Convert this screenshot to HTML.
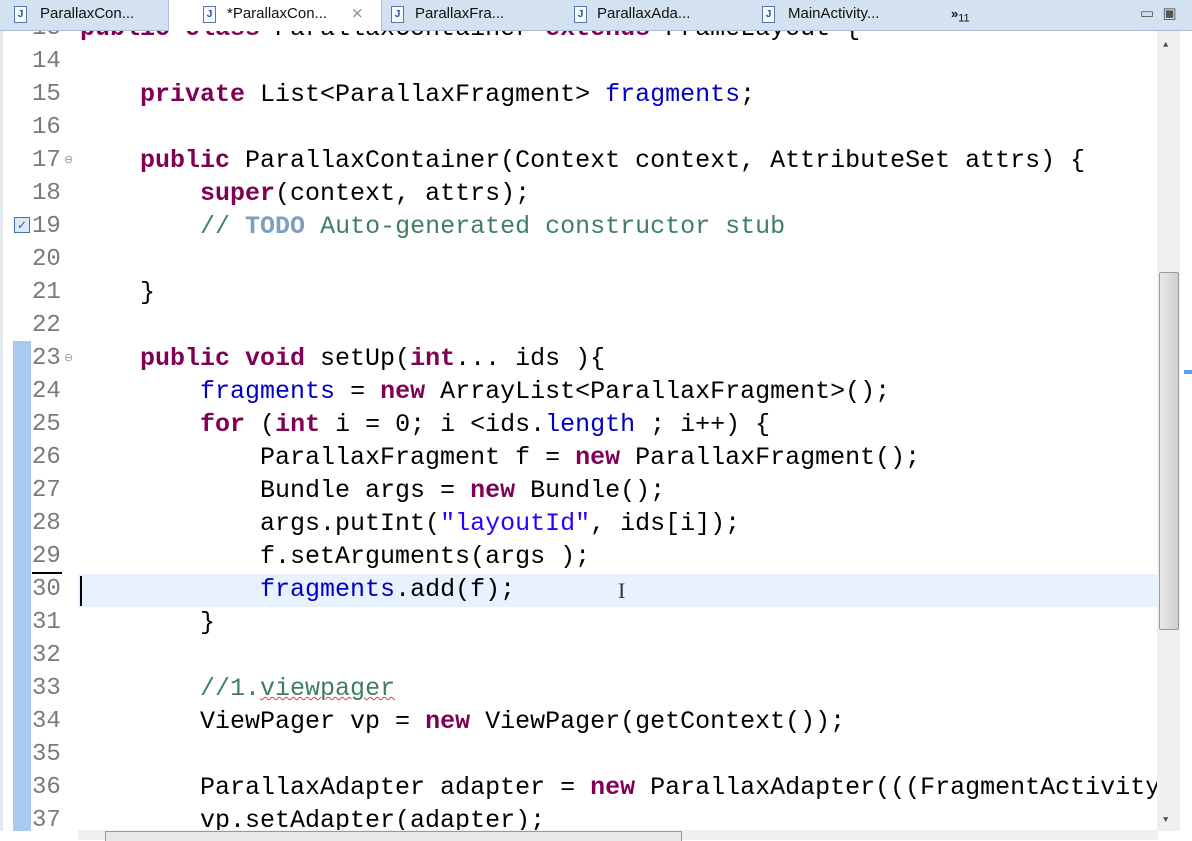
<!DOCTYPE html>
<html><head><meta charset="utf-8"><style>
body{margin:0;width:1192px;height:840px;overflow:hidden;background:#fff;position:relative;font-family:"Liberation Mono",monospace}
.tabs{position:absolute;left:0;top:0;width:1192px;height:30px;background:#d4e1f0;border-bottom:1px solid #a9bcd3;font-family:"Liberation Sans",sans-serif;font-size:15px;color:#111;z-index:5}
.tt{position:absolute;top:0;line-height:28px;white-space:nowrap}
.ic{position:absolute;top:6px;width:11px;height:15px;border:1px solid #5577aa;background:#f6f9ff;font-size:10px;line-height:15px;text-align:center;color:#2a4f8a;font-weight:bold;font-family:"Liberation Sans",sans-serif}
.act{position:absolute;left:168px;top:0;width:212px;height:31px;background:#fff;border-left:1px solid #a9bcd3;border-right:1px solid #a9bcd3}
.lbar{position:absolute;left:0;top:31px;width:3px;height:800px;background:#e3e8ef}
.chg{position:absolute;left:13px;top:341px;width:18px;height:490px;background:#a9c9f0}
.ln{position:absolute;left:32px;width:44px;font-size:24px;color:#7a7a7a;line-height:33px}
.code{position:absolute;left:80px;font-size:25px;line-height:33px;white-space:pre;color:#000}
.k{color:#7f0055;font-weight:bold}.f{color:#0000c0}.c{color:#3f7f5f}.t{color:#7f9fbf;font-weight:bold}.s{color:#2a00ff}
.w{text-decoration:underline wavy #e04040;text-decoration-thickness:1px}
.cur{position:absolute;left:78px;top:574px;width:1079px;height:33px;background:#e8f2fe}
.vs{position:absolute;left:1157px;top:31px;width:23px;height:800px;background:#f0f0f0}
.thumb{position:absolute;left:1159px;top:272px;width:20px;height:358px;background:linear-gradient(90deg,#e8e8e8,#d0d0d0);border:1px solid #999;border-radius:2px;box-sizing:border-box}
.hs{position:absolute;left:78px;top:830px;width:1080px;height:10px;background:#f0f0f0}
</style></head><body>
<div class="lbar"></div>
<div class="chg"></div>
<div class="cur"></div>
<div style="position:absolute;left:80px;top:576px;width:2px;height:30px;background:#000"></div>
<div style="position:absolute;left:32px;top:572px;width:30px;height:2px;background:#000"></div>
<div class="ln" style="top:12px">13<br>14<br>15<br>16<br>17<br>18<br>19<br>20<br>21<br>22<br>23<br>24<br>25<br>26<br>27<br>28<br>29<br>30<br>31<br>32<br>33<br>34<br>35<br>36<br>37</div>
<div style="position:absolute;left:14px;top:217px;width:14px;height:14px;border:1px solid #4a6fa5;background:#dde8f7;color:#2a60b0;font-size:12px;line-height:14px;text-align:center;font-family:'DejaVu Sans',sans-serif">✓</div>
<div style="position:absolute;left:64px;top:153px;font-size:11px;color:#8899aa">⊖</div>
<div style="position:absolute;left:64px;top:351px;font-size:11px;color:#8899aa">⊖</div>
<div class="code" style="top:12px"><span class="k">public class</span> ParallaxContainer <span class="k">extends</span> FrameLayout {

    <span class="k">private</span> List&lt;ParallaxFragment&gt; <span class="f">fragments</span>;

    <span class="k">public</span> ParallaxContainer(Context context, AttributeSet attrs) {
        <span class="k">super</span>(context, attrs);
        <span class="c">// <span class="t">TODO</span> Auto-generated constructor stub</span>

    }

    <span class="k">public void</span> setUp(<span class="k">int</span>... ids ){
        <span class="f">fragments</span> = <span class="k">new</span> ArrayList&lt;ParallaxFragment&gt;();
        <span class="k">for</span> (<span class="k">int</span> i = 0; i &lt;ids.<span class="f">length</span> ; i++) {
            ParallaxFragment f = <span class="k">new</span> ParallaxFragment();
            Bundle args = <span class="k">new</span> Bundle();
            args.putInt(<span class="s">"layoutId"</span>, ids[i]);
            f.setArguments(args );
            <span class="f">fragments</span>.add(f);
        }

        <span class="c">//1.<span class="w">viewpager</span></span>
        ViewPager vp = <span class="k">new</span> ViewPager(getContext());

        ParallaxAdapter adapter = <span class="k">new</span> ParallaxAdapter(((FragmentActivity
        vp.setAdapter(adapter);</div>
<div style="position:absolute;left:618px;top:578px;font-size:22px;color:#333;font-family:'Liberation Serif',serif">I</div>
<div class="tabs">
<div class="act"></div>
<div class="ic" style="left:14px">J</div><div class="tt" style="left:40px">ParallaxCon...</div>
<div class="ic" style="left:203px">J</div><div class="tt" style="left:227px">*ParallaxCon...</div><div class="tt" style="left:351px;color:#888">⨯</div>
<div class="ic" style="left:391px">J</div><div class="tt" style="left:415px">ParallaxFra...</div>
<div class="ic" style="left:574px">J</div><div class="tt" style="left:597px">ParallaxAda...</div>
<div class="ic" style="left:762px">J</div><div class="tt" style="left:788px">MainActivity...</div>
<div class="tt" style="left:951px;font-size:13px"><b>»</b><sub style="font-size:11px">11</sub></div>
<div class="tt" style="left:1140px;color:#555">▭ &nbsp;▣</div>
</div>
<div class="vs"></div>
<div class="thumb"></div>
<div style="position:absolute;left:1163px;top:40px;font-size:9px;color:#555">▲</div>
<div style="position:absolute;left:1163px;top:815px;font-size:9px;color:#555">▼</div>
<div style="position:absolute;left:1184px;top:370px;width:8px;height:4px;background:#5aa0f0"></div>
<div class="hs"></div>
<div style="position:absolute;left:105px;top:831px;width:575px;height:9px;border:1px solid #999;border-bottom:none;background:#e8e8e8"></div>
</body></html>
